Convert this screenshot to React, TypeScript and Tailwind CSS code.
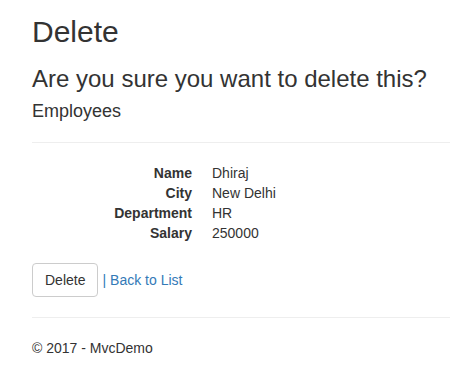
const rows: [string, string][] = [
  ['Name', 'Dhiraj'],
  ['City', 'New Delhi'],
  ['Department', 'HR'],
  ['Salary', '250000'],
];

export default function App() {
  return (
    <div className="min-h-[372px] overflow-hidden bg-white pl-[32px] font-['Liberation_Sans',Arial,sans-serif] text-[14px] leading-[20px] text-[#333]">
      <h2 className="mt-[15px] mb-0 text-[30px] leading-[33px] font-normal">Delete</h2>
      <h3 className="mt-[18px] mb-0 text-[24px] leading-[26.4px] font-normal">Are you sure you want to delete this?</h3>
      <div>
        <h4 className="mt-[10px] mb-0 text-[18px] leading-[19.8px] font-normal">Employees</h4>
        <hr className="mt-[20px] border-0 border-t border-[#eee]" />
        <dl className="mt-[20px]">
          {rows.map(([label, value]) => (
            <div key={label} className="flex">
              <dt className="w-[160px] text-right font-bold">{label}</dt>
              <dd className="ml-[20px]">{value}</dd>
            </div>
          ))}
        </dl>
        <form className="mt-[20px] flex items-center" onSubmit={(e) => e.preventDefault()}>
          <button
            type="submit"
            className="h-[34px] rounded-[4px] border border-[#ccc] bg-white px-[12px] py-[6px] text-[14px] leading-[20px] text-[#333]"
          >
            Delete
          </button>
          <span className="ml-[4px] text-[#337ab7]">|</span>
          <a href="#" className="ml-[4px] text-[#337ab7]">Back to List</a>
        </form>
      </div>
      <hr className="mt-[20px] border-0 border-t border-[#eee]" />
      <footer>
        <p className="mt-[20px]">© 2017 - MvcDemo</p>
      </footer>
    </div>
  );
}
